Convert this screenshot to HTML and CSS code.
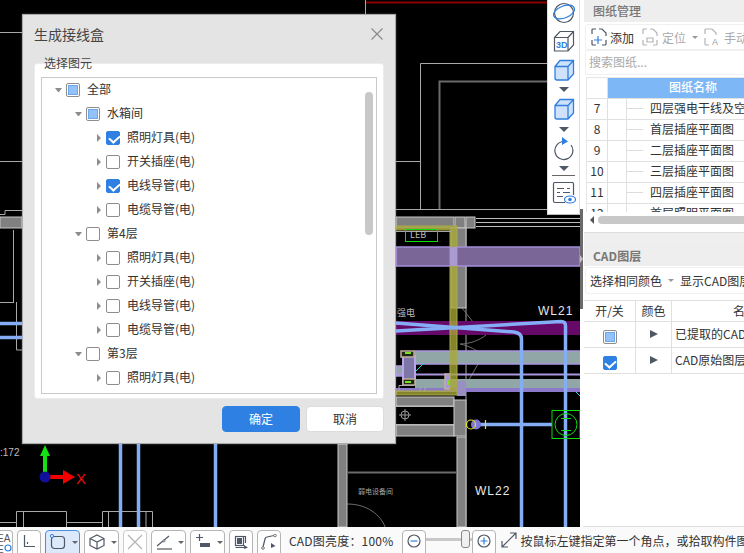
FILE: index.html
```html
<!DOCTYPE html>
<html lang="zh-CN">
<head>
<meta charset="utf-8">
<title>生成接线盒</title>
<link rel="stylesheet" href="styles.css">
</head>
<body>
<div class="app">
  <div class="main">
    <div class="canvas">
      <svg class="drawing" width="580" height="527" viewBox="0 0 580 527">
        <!-- thin outlines -->
        <g class="ln">
          <path d="M0 32.5H22M0 161.5H22M0 214.5H5V210.5H22M13.500 230V302M0 302.500H14M16.500 302V350H22"/>
          <path d="M365.500 0V14M420.500 209V63.500H547M396 161.500H420M396 209.500H547"/>
          <path d="M466 220V527M396 406.500H454M396 424.500H454"/>
          <path d="M16.500 527V511.500H66.500V527M23.500 511.500V527M66.500 522.500H102.500M102.500 527V511.500H152.500V527M108.500 511.500V527M146 511.500V527M0 522.500H16"/>
          <path d="M347 504C358 504 366 507 372 511C378 515 383 521 385 527" class="thin"/>
          <path d="M462 308L473 322M460 344C470 344 480 340 486 335M460 344C470 346 476 350 481 354M462 392L478 364" class="thin"/>
        </g>
        <path class="ln-dark" d="M439.500 209V81.500H547M348 472.500H456"/>
        <path class="ln-red" d="M366 2.500H547"/>
        <!-- walls -->
        <g class="wall">
          <rect x="0" y="217" width="22" height="11"/>
          <rect x="396" y="217" width="58" height="11"/>
          <rect x="455" y="217" width="10" height="11"/>
          <rect x="466" y="217" width="9" height="11"/>
          <rect x="451" y="228" width="15" height="80"/>
          <rect x="396" y="397" width="58" height="9"/>
          <rect x="396" y="425" width="58" height="11"/>
          <rect x="454" y="400" width="12" height="36"/>
          <rect x="457" y="437" width="9" height="90"/>
          <rect x="338" y="444" width="9" height="83"/>
        </g>
        <path class="ln-thin" d="M476 218.500H580M476 222.500H580M476 226.500H580"/>
        <!-- bands -->
        <rect class="band-purple" x="396" y="247" width="184" height="19"/>
        <rect class="band-magenta" x="396" y="321" width="184" height="14"/>
        <rect class="band-teal" x="415" y="351" width="165" height="13"/>
        <rect class="band-teal" x="396" y="366" width="7" height="10"/>
        <path class="stripe" d="M396 374.500H580"/>
        <rect class="band-teal-flat" x="415" y="379" width="165" height="9"/>
        <rect class="band-violet" x="396" y="388" width="184" height="4"/>
        <rect class="box-purple" x="403" y="356" width="12" height="28"/>
        <rect class="box-tan" x="401" y="351" width="13" height="6"/>
        <rect class="box-tan" x="403" y="379" width="12" height="6"/>
        <rect class="box-tan-purple" x="445" y="374" width="5" height="15"/>
        <path class="spot-g" d="M448 380V385M405 353H411M405 382H411"/>
        <path class="ln" d="M399 392V385.500H414M421 388L419 392M426 386L424 392"/>
        <path class="ln-cyan" d="M416 371L423 364M576 392L580 396"/>
        <!-- olive frame -->
        <path class="olive" d="M396 226H457V395H396V391H450V230H396Z"/>
        <rect class="overlap" x="450" y="247" width="7" height="19"/>
        <rect class="overlap-low" x="457" y="381" width="9" height="15"/>
        <path class="ln" d="M396 231.500H451"/>
        <rect class="ln-green" x="405.500" y="229.500" width="32" height="12"/>
        <!-- cables -->
        <g class="cable">
          <path d="M0 323.500H22M0 337.500H22"/>
          <path d="M396 323L514 332Q521.500 333 521.500 339V527"/>
          <path d="M396 331L561 321.500Q565.500 321.500 565.500 326V527"/>
          <path d="M120.500 444V527M138.500 444V527M215.500 444V527M480 424.500H552"/>
        </g>
        <circle class="blob" cx="476" cy="424.500" r="5"/>
        <circle class="mark" cx="471" cy="424.500" r="4.500"/>
        <path class="mark" d="M485.500 420V429"/>
        <rect class="ln-green" x="552" y="410.500" width="28" height="28"/>
        <circle class="ln-green" cx="566" cy="424.500" r="11"/>
        <path class="ln-green" d="M561 418.500H571M561 430.500H571"/>
        <g class="target"><circle cx="405" cy="415" r="4"/><path d="M405 409V421M399 415H411"/></g>
        <!-- labels -->
        <text class="cad-text" x="538" y="315">WL21</text>
        <text class="cad-text" x="475" y="495">WL22</text>
        <text class="cad-small" x="410" y="238">LEB</text>
        <text class="cad-small" x="397" y="316">强电</text>
        <text class="cad-tiny" x="358" y="494">弱电设备间</text>
        <text class="cad-mark" x="0" y="456">:172</text>
        <!-- axis -->
        <path class="axis-g" d="M43 477V456H40L45 445L50 456H47V477Z"/>
        <path class="axis-r" d="M45 475H63V470L75 477L63 484V479H45Z"/>
        <circle class="axis-b" cx="45" cy="477" r="5.500"/>
        <text class="axis-x" x="76" y="484">X</text>
      </svg>

      <div class="float-tools">
        <svg class="ft-icon" width="24" height="22" viewBox="0 0 24 22"><circle class="i-dark" cx="12" cy="11" r="9.500"/><ellipse class="i-blue" cx="12" cy="10" rx="11" ry="6" transform="rotate(-22 12 10)"/></svg>
        <svg class="ft-icon" width="24" height="22" viewBox="0 0 24 22"><path class="i-dark" d="M2.500 7.500L8 1.500H21.500V15L16 21H2.500ZM2.500 7.500H16V21M16 7.500L21.500 1.500"/><text class="i-3d" x="4" y="18">3D</text></svg>
        <svg class="ft-icon ft-m7" width="24" height="22" viewBox="0 0 24 22"><path class="i-cube" d="M3 7.500L8 1.500H21.500V15L16 21H5Q3 21 3 19ZM3 7.500H16V21M16 7.500L21.500 1.500"/></svg>
        <span class="caret-down ft-caret"></span>
        <svg class="ft-icon" width="24" height="22" viewBox="0 0 24 22"><path class="i-cube" d="M3 7.500L8 1.500H21.500V15L16 21H5Q3 21 3 19ZM3 7.500H16V21M16 7.500L21.500 1.500"/></svg>
        <span class="caret-down ft-caret ft-m7"></span>
        <svg class="ft-icon ft-m5" width="24" height="24" viewBox="0 0 24 24"><path class="i-dark" d="M12 4.500A9 9 0 1 0 19 8"/><path class="i-fill" d="M10 0L16 4.500L10 8Z"/></svg>
        <span class="caret-down ft-caret ft-m5"></span>
        <div class="ft-line"></div>
        <svg class="ft-icon" width="24" height="22" viewBox="0 0 24 22"><path class="i-dark" d="M13 20.500H3Q1.500 20.500 1.500 19V2Q1.500 .500 3 .500H20Q21.500 .500 21.500 2V13"/><path class="i-dark" d="M5 6.500H12M15 6.500H18M5 10.500H8M11 10.500H18M5 14.500H11"/><ellipse class="i-blue" cx="18" cy="17.500" rx="5.500" ry="3.500"/><circle class="i-fill" cx="18" cy="17.500" r="1.800"/></svg>
      </div>
    </div>
    <div class="splitter"></div>

    <aside class="panel">
      <div class="pane-title">图纸管理</div>
      <div class="pane-tools">
        <svg class="tool-ic" width="16" height="18" viewBox="0 0 16 18"><path class="i-dark" d="M1 6V2Q1 1 2 1H5M8 1H11L15 5V8M15 12V16Q15 17 14 17H11M5 17H2Q1 17 1 16V12"/><path class="i-blue" d="M7 8V16M3 12H11"/></svg>
        <span class="tool-label tool-first">添加</span>
        <svg class="tool-ic tool-sp" width="16" height="18" viewBox="0 0 16 18"><path class="i-mute" d="M1 6V2Q1 1 2 1H5M8 1H11L15 5V8M15 12V16Q15 17 14 17H11M5 17H2Q1 17 1 16V12M5 10H11V14H5Z"/></svg>
        <span class="tool-label mute">定位</span>
        <span class="caret-small"></span>
        <svg class="tool-ic" width="16" height="18" viewBox="0 0 16 18"><path class="i-mute" d="M1 6V2Q1 1 2 1H8L12 5V7M1 10V16Q1 17 2 17H5"/><text class="i-a" x="8" y="17">A</text></svg>
        <span class="tool-label mute">手动</span>
      </div>
      <div class="pane-search">搜索图纸...</div>
      <div class="sheet">
        <div class="sheet-head"><span class="sh-num"></span><span class="sh-name">图纸名称</span></div>
        <div class="sheet-row"><span class="sh-num">7</span><span class="sh-tree"></span><span class="sh-dash"></span><span class="sh-text">四层强电干线及空调</span></div>
        <div class="sheet-row"><span class="sh-num">8</span><span class="sh-tree"></span><span class="sh-dash"></span><span class="sh-text">首层插座平面图</span></div>
        <div class="sheet-row"><span class="sh-num">9</span><span class="sh-tree"></span><span class="sh-dash"></span><span class="sh-text">二层插座平面图</span></div>
        <div class="sheet-row"><span class="sh-num">10</span><span class="sh-tree"></span><span class="sh-dash"></span><span class="sh-text">三层插座平面图</span></div>
        <div class="sheet-row"><span class="sh-num">11</span><span class="sh-tree"></span><span class="sh-dash"></span><span class="sh-text">四层插座平面图</span></div>
        <div class="sheet-row"><span class="sh-num">12</span><span class="sh-tree"></span><span class="sh-dash"></span><span class="sh-text">首层照明平面图</span></div>
      </div>
      <div class="hscroll"><span class="hscroll-arrow"></span><span class="hscroll-thumb"></span></div>
      <div class="pane-gap"></div>
      <div class="pane-title pane-title-bold">CAD图层</div>
      <div class="pane-tools layer-tools">
        <span class="tool-label">选择相同颜色</span>
        <span class="caret-small"></span>
        <span class="tool-label layer-show">显示CAD图层</span>
      </div>
      <div class="layers">
        <div class="layer-row layer-head"><span class="lc-a">开/关</span><span class="lc-b">颜色</span><span class="lc-c lc-center">名称</span></div>
        <div class="layer-row layer-body"><span class="lc-a"><i class="cb cb-partial"></i></span><span class="lc-b"><i class="play"></i></span><span class="lc-c">已提取的CAD图层</span></div>
        <div class="layer-row layer-body"><span class="lc-a"><i class="cb cb-on"></i></span><span class="lc-b"><i class="play"></i></span><span class="lc-c">CAD原始图层</span></div>
      </div>
    </aside>
  </div>

  <footer class="statusbar">
    <div class="sb-btn sb-first"><svg width="14" height="20" viewBox="0 0 14 20"><text class="i-eq" x="-2" y="9">EA</text><text class="i-eq" x="-2" y="20">E</text><circle class="i-blue" cx="9" cy="15" r="3"/></svg></div>
    <div class="sb-btn sb-w24"><svg width="14" height="14" viewBox="0 0 14 14"><path class="i-dark" d="M2.500 1V12.500H13"/><path class="i-dark" d="M5.500 8V10"/></svg></div>
    <div class="sb-btn sb-w35 sb-on"><svg width="16" height="16" viewBox="0 0 16 16"><rect class="i-dark" x="1.500" y="2.500" width="13" height="12" rx="3"/><circle class="i-dotb" cx="2" cy="2" r="1.600"/></svg><span class="caret-small"></span></div>
    <div class="sb-btn sb-w35"><svg width="16" height="16" viewBox="0 0 16 16"><path class="i-dark" d="M8 1L15 4.500V11.500L8 15L1 11.500V4.500ZM1 4.500L8 8L15 4.500M8 8V15"/></svg><span class="caret-small"></span></div>
    <div class="sb-btn sb-w24 sb-dim"><svg width="16" height="16" viewBox="0 0 16 16"><path class="i-mute" d="M1 1L15 15M15 1L1 15"/></svg></div>
    <div class="sb-btn sb-w35"><svg width="16" height="16" viewBox="0 0 16 16"><path class="i-dark" d="M1 12L13 2"/><path class="i-mute2" d="M1 15H16"/><circle class="i-dotg" cx="8" cy="7" r="1"/></svg><span class="caret-small"></span></div>
    <div class="sb-btn sb-w35"><svg width="16" height="16" viewBox="0 0 16 16"><path class="i-dark" d="M1 3.500H8M4.500 0V7"/><rect class="i-solid" x="5" y="9" width="10" height="4"/></svg><span class="caret-small"></span></div>
    <div class="sb-btn sb-w24"><svg width="14" height="16" viewBox="0 0 14 16"><rect class="i-dark" x="1.500" y="2.500" width="8" height="9"/><rect class="i-solid" x="3" y="4" width="5" height="6"/><path class="i-dark" d="M1.500 13.500H10M10 2.500H11.500V9"/><path class="i-solid" d="M10 11L14 13.500L10 15Z"/></svg></div>
    <div class="sb-btn sb-w24"><svg width="16" height="16" viewBox="0 0 16 16"><path class="i-dark" d="M2 13L4 5Q4.500 3 6 3L13 1.500"/><circle class="i-node" cx="2" cy="14" r="1.300"/><circle class="i-node" cx="14" cy="1.500" r="1.300"/><path class="i-solid" d="M10 9L14.500 12L10 14Z"/></svg></div>
    <span class="sb-text sb-bright">CAD图亮度：100%</span>
    <div class="sb-btn sb-zoom"><svg width="14" height="14" viewBox="0 0 14 14"><circle class="i-dark" cx="7" cy="7" r="6"/><path class="i-blue" d="M3.500 7H10.500"/></svg></div>
    <div class="slider"><span class="slider-handle"></span></div>
    <div class="sb-btn sb-zoom sb-zoom-plus"><svg width="14" height="14" viewBox="0 0 14 14"><circle class="i-dark" cx="7" cy="7" r="6"/><path class="i-blue" d="M3.500 7H10.500M7 3.500V10.500"/></svg></div>
    <svg class="sb-expand" width="16" height="16" viewBox="0 0 16 16"><path class="i-dark" d="M1 15L15 1M9 1H15V7M1 9V15H7"/></svg>
    <span class="sb-text sb-hint">按鼠标左键指定第一个角点，或拾取构件图元</span>
  </footer>

  <section class="dialog">
    <header class="dialog-head">
      <h1 class="dialog-title">生成接线盒</h1>
      <svg class="dialog-close" width="12" height="12" viewBox="0 0 12 12"><path d="M.5 .5L11.500 11.500M11.500 .5L.5 11.500"/></svg>
    </header>
    <div class="fieldset">
      <span class="legend">选择图元</span>
      <div class="tree">
        <div class="node l0"><i class="caret-open"></i><i class="cb cb-partial"></i><span>全部</span></div>
        <div class="node l1"><i class="caret-open"></i><i class="cb cb-partial"></i><span>水箱间</span></div>
        <div class="node l2"><i class="caret-closed"></i><i class="cb cb-on"></i><span>照明灯具(电)</span></div>
        <div class="node l2"><i class="caret-closed"></i><i class="cb"></i><span>开关插座(电)</span></div>
        <div class="node l2"><i class="caret-closed"></i><i class="cb cb-on"></i><span>电线导管(电)</span></div>
        <div class="node l2"><i class="caret-closed"></i><i class="cb"></i><span>电缆导管(电)</span></div>
        <div class="node l1"><i class="caret-open"></i><i class="cb"></i><span>第4层</span></div>
        <div class="node l2"><i class="caret-closed"></i><i class="cb"></i><span>照明灯具(电)</span></div>
        <div class="node l2"><i class="caret-closed"></i><i class="cb"></i><span>开关插座(电)</span></div>
        <div class="node l2"><i class="caret-closed"></i><i class="cb"></i><span>电线导管(电)</span></div>
        <div class="node l2"><i class="caret-closed"></i><i class="cb"></i><span>电缆导管(电)</span></div>
        <div class="node l1"><i class="caret-open"></i><i class="cb"></i><span>第3层</span></div>
        <div class="node l2"><i class="caret-closed"></i><i class="cb"></i><span>照明灯具(电)</span></div>
        <span class="tree-scroll"></span>
      </div>
    </div>
    <div class="dialog-actions">
      <button class="btn btn-primary" type="button">确定</button>
      <button class="btn" type="button">取消</button>
    </div>
  </section>
</div>
</body>
</html>
```

FILE: styles.css
```css
* { box-sizing: border-box; }
html, body { margin: 0; padding: 0; background: #fff; }
body { font-family: "Noto Sans CJK SC", "Liberation Sans", sans-serif; font-size: 12px; color: #333; }
i { display: block; font-style: normal; }

.app { position: relative; width: 744px; height: 553px; display: flex; flex-direction: column; overflow: hidden; }
.main { display: flex; height: 527px; flex: none; }

/* CAD canvas */
.canvas { position: relative; flex: 0 0 580px; background: #000; overflow: hidden; }
.drawing { display: block; }
.ln { fill: none; stroke: #a8a8a8; stroke-width: 1; }
.ln .thin, .thin { stroke: #6e6e6e; }
.ln-dark { fill: none; stroke: #6b6b6b; stroke-width: 2; }
.ln-thin { fill: none; stroke: #bdbdbd; stroke-width: 1; }
.ln-red { fill: none; stroke: #8a0000; stroke-width: 2; }
.ln-green { fill: none; stroke: #0fdc0f; stroke-width: 1; }
.ln-cyan { fill: none; stroke: #22d6e8; stroke-width: 1; }
.wall rect { fill: #808080; stroke: #c8c8c8; stroke-width: 1; }
.band-purple { fill: #7a6797; stroke: #a48fd8; stroke-width: 1.500; }
.band-magenta { fill: #650a68; }
.band-teal { fill: #91a6a6; stroke: #ab97e0; stroke-width: 1.500; }
.band-teal-flat { fill: #91a6a6; }
.band-violet { fill: #8d79c9; }
.stripe { fill: none; stroke: #ab97e0; stroke-width: 2; }
.box-purple { fill: #7f76a8; stroke: #b9a5ea; stroke-width: 2; }
.box-tan { fill: #1d2a14; stroke: #c2ae9f; stroke-width: 1.500; }
.box-tan-purple { fill: #a796da; stroke: #c2ae9f; stroke-width: 1.500; }
.spot-g { fill: none; stroke: #7fe020; stroke-width: 2; }
.olive { fill: #a8a938; fill-opacity: .78; stroke: #a8a84a; stroke-width: 1; }
.overlap { fill: #ab9ad0; }
.overlap-low { fill: #9a8fc4; }
.cable { fill: none; stroke: #85adf5; stroke-width: 3.500; }
.blob { fill: #7d78d8; }
.mark { fill: none; stroke: #e5e520; stroke-width: 1.200; }
.target { fill: none; stroke: #9a9a9a; stroke-width: 1; }
.cad-text { fill: #e8e8e8; font-family: "Liberation Sans", sans-serif; font-size: 12px; letter-spacing: 1px; }
.cad-small { fill: #bdbdbd; font-family: "Noto Sans CJK SC", sans-serif; font-size: 9px; }
.cad-tiny { fill: #a5a5a5; font-family: "Noto Sans CJK SC", sans-serif; font-size: 7px; }
.cad-mark { fill: #bdbdbd; font-family: "Liberation Sans", sans-serif; font-size: 10px; }
.axis-g { fill: #14e014; }
.axis-r { fill: #f00000; }
.axis-b { fill: #10109a; }
.axis-x { fill: #e81010; font-family: "Liberation Sans", sans-serif; font-size: 15px; }

/* floating view tools */
.float-tools { position: absolute; top: 0; right: 0; width: 33px; height: 215px; background: #fff; border-right: 1px solid #ddd; border-bottom: 1px solid #bbb; border-left: 1px solid #ddd; display: flex; flex-direction: column; align-items: center; padding-top: 2px; }
.ft-icon { display: block; flex: none; margin-top: 6px; }
.ft-icon:first-child { margin-top: 0; }
.ft-caret { margin-top: 6px; }
.float-tools .ft-m7 { margin-top: 7px; }
.float-tools .ft-m5 { margin-top: 5px; }
.ft-line { width: 23px; height: 1px; background: #666; margin-top: 4px; }
.ft-line + .ft-icon { margin-top: 6px; }
.i-dark { fill: none; stroke: #4f5866; stroke-width: 1.200; }
.i-blue { fill: none; stroke: #2f7fe0; stroke-width: 1.200; }
.i-mute { fill: none; stroke: #b4b4b4; stroke-width: 1.200; }
.i-mute2 { fill: none; stroke: #9a9a9a; stroke-width: 2; }
.i-fill { fill: #2f7fe0; }
.i-cube { fill: #cfe2fb; stroke: #2f7fe0; stroke-width: 1.300; }
.i-3d { fill: #2f7fe0; font-family: "Liberation Sans", sans-serif; font-size: 9px; font-weight: 700; }
.i-a { fill: #9a9a9a; font-family: "Liberation Sans", sans-serif; font-size: 9px; }
.i-eq { fill: #555; font-family: "Liberation Sans", sans-serif; font-size: 10px; }
.i-solid { fill: #4f5866; }
.i-dotb { fill: #dceafc; stroke: #2f7fe0; stroke-width: 1; }
.i-dotg { fill: #fff; stroke: #777; }
.i-node { fill: #fff; stroke: #777; stroke-width: 1; }
.caret-down { display: block; width: 0; height: 0; border-style: solid; border-width: 5px 5px 0; border-color: #4f5866 transparent transparent; flex: none; }
.caret-small { display: block; width: 0; height: 0; border-style: solid; border-width: 3px 3.500px 0; border-color: #666 transparent transparent; flex: none; }

.splitter { position: relative; flex: 0 0 3px; background: linear-gradient(#fff 0 209px, #6b6b6b 209px 309px, #fff 309px); }
.splitter::after { content: ""; position: absolute; left: 0; top: 255px; border-style: solid; border-width: 4px 0 4px 3px; border-color: transparent transparent transparent #c4c4c4; }

/* right panel */
.panel { flex: 1; min-width: 0; background: #fff; border-bottom: 1px solid #ddd; overflow: hidden; display: flex; flex-direction: column; }
.pane-title { flex: none; height: 22px; margin-left: 1px; padding-left: 9px; background: #eee; color: #777; font-size: 12px; line-height: 22px; font-weight: 500; white-space: nowrap; }
.pane-title-bold { height: 21px; line-height: 21px; font-weight: 700; }
.pane-tools { flex: none; height: 26px; margin: 2px 0 0 2px; padding-left: 5px; display: flex; align-items: center; border: 1px solid #f0f0f0; border-right: 0; border-radius: 4px 0 0 4px; white-space: nowrap; overflow: hidden; }
.tool-ic { flex: none; display: block; }
.tool-label { flex: none; margin: 1px 0 0 4px; font-size: 12px; color: #333; line-height: 18px; }
.tool-label.mute { color: #aaa; }
.tool-label.tool-first { margin-left: 3px; }
.tool-sp { margin-left: 8px; }
.pane-tools .caret-small { margin: 0 6px; border-top-color: #999; }
.pane-search { flex: none; height: 25px; margin: 0 0 0 2px; padding-left: 3px; border: 1px solid #f0f0f0; border-right: 0; color: #aaa; font-size: 12px; line-height: 21px; }
.sheet { flex: none; height: 135px; margin: 2px 0 0 3px; overflow: hidden; border-top: 1px solid #e6e6e6; border-left: 1px solid #e6e6e6; }
.sheet-head { display: flex; height: 20px; }
.sh-num { flex: 0 0 21px; border-right: 1px solid #e0e0e0; text-align: center; color: #333; font-size: 12px; line-height: 18px; }
.sh-name { flex: 1; background: #7db7f5; color: #fff; font-weight: 500; text-align: center; line-height: 18px; padding-left: 34px; white-space: nowrap; }
.sheet-row { display: flex; align-items: stretch; height: 21px; border-top: 1px solid #e0e0e0; white-space: nowrap; line-height: 18px; }
.sh-tree { flex: 0 0 19px; border-right: 1px solid #e0e0e0; }
.sh-dash { flex: 0 0 16px; height: 1px; margin-top: 9px; background: #ddd; }
.sh-text { margin-left: 7px; color: #333; }
.hscroll { flex: none; height: 14px; margin-top: 1px; padding-left: 7px; display: flex; align-items: center; gap: 4px; }
.hscroll-arrow { width: 0; height: 0; border-style: solid; border-width: 4px 4px 4px 0; border-color: transparent #555 transparent transparent; flex: none; }
.hscroll-thumb { flex: 1; height: 8px; background: #c8c8c8; border-radius: 4px 0 0 4px; }
.pane-gap { flex: none; height: 18px; margin-left: 1px; background: linear-gradient(#fff 0 5px, #ddd 5px 6px, #efefef 6px); }
.layer-tools { height: 27px; margin-top: 1px; padding-left: 4px; }
.layer-tools .tool-label { margin-left: 0; margin-top: 0; }
.layer-tools .caret-small { margin: 0 6px; }
.layers { flex: none; margin: 6px 0 0 1px; border-top: 1px solid #e0e0e0; }
.layer-row { display: flex; border-bottom: 1px solid #e0e0e0; white-space: nowrap; }
.layer-head { height: 21px; line-height: 20px; }
.layer-body { height: 26px; line-height: 23px; }
.lc-a { flex: 0 0 52px; border-right: 1px solid #e0e0e0; display: flex; align-items: center; justify-content: center; }
.layer-body .lc-a { padding-top: 5px; }
.lc-b { flex: 0 0 36px; border-right: 1px solid #e0e0e0; display: flex; align-items: center; justify-content: center; }
.lc-c { flex: 1; min-width: 0; padding-left: 3px; }
.lc-center { padding-left: 61px; }
.play { width: 0; height: 0; margin-top: -2px; border-style: solid; border-width: 4.500px 0 4.500px 8px; border-color: transparent transparent transparent #4f5866; }

/* status bar */
.statusbar { flex: none; height: 26px; background: #fafafa; padding-top: 3px; display: flex; align-items: flex-start; gap: 4px; overflow: hidden; white-space: nowrap; }
.sb-btn { flex: none; height: 28px; background: #fff; border: 1px solid #b5b5b5; border-radius: 4px; display: flex; align-items: flex-start; padding-top: 2px; }
.sb-first { width: 14px; margin-left: -1px; border-left: 0; border-radius: 0 4px 4px 0; }
.sb-w24 { width: 24px; justify-content: center; padding-top: 3px; }
.sb-w35 { width: 35px; padding-left: 4px; gap: 6px; padding-top: 3px; }
.sb-w35 .caret-small { margin-top: 7px; }
.sb-on { background: #dbe9fb; border-color: #4a90e2; }
.sb-dim { border-color: #ccc; }
.statusbar svg { display: block; flex: none; }
.sb-text { flex: none; color: #333; font-size: 12px; line-height: 18px; }
.sb-bright { margin-left: 4px; margin-top: 2px; letter-spacing: .2px; }
.sb-zoom { width: 24px; justify-content: center; padding-top: 3px; margin-left: 5px; }
.slider { flex: 0 0 46px; height: 20px; margin: 0 0 0 -4px; position: relative; background: linear-gradient(transparent 0 8px, #c8c8c8 8px 11px, transparent 11px); }
.slider-handle { position: absolute; top: 0; right: 2px; width: 9px; height: 18px; background: #f0f0f0; border: 1px solid #888; border-radius: 3px; }
.statusbar .sb-zoom-plus { margin-left: -4px; }
.statusbar .sb-expand { margin: 2px 0 0 1px; }
.sb-hint { margin: 2px 0 0 -1px; }

/* dialog */
.dialog { position: absolute; left: 22px; top: 14px; width: 374px; height: 430px; background: #e4e4e5; border: 1px solid #a9a9a9; box-shadow: 0 0 2px rgba(255,255,255,.3); display: flex; flex-direction: column; }
.dialog-head { flex: none; height: 48px; padding: 0 12px 0 11px; display: flex; align-items: flex-start; justify-content: space-between; }
.dialog-title { margin: 9px 0 0; font-size: 14px; font-weight: 400; line-height: 20px; color: #444; }
.dialog-close { display: block; margin-top: 13px; }
.dialog-close path { fill: none; stroke: #888; stroke-width: 1.100; }
.fieldset { position: relative; flex: none; height: 336px; margin: 0 11px; padding: 13px 6px 6px; background: #fff; border: 1px solid #ececec; border-radius: 3px; }
.legend { position: absolute; left: 9px; top: -10px; color: #444; line-height: 18px; }
.tree { position: relative; height: 317px; margin: 0; border: 1px solid #c9c9c9; }
.node { display: flex; align-items: center; height: 24px; white-space: nowrap; color: #333; line-height: 18px; }
.node span { margin-top: -2px; }
.l0 { padding-left: 13px; }
.l1 { padding-left: 33px; }
.l2 { padding-left: 55px; }
.caret-open { flex: none; width: 7px; margin-right: 4px; height: 0; border-style: solid; border-width: 4px 3.500px 0; border-color: #8d8d8d transparent transparent; }
.caret-closed { flex: none; width: 0; height: 0; margin-right: 5px; border-style: solid; border-width: 4.500px 0 4.500px 4.500px; border-color: transparent transparent transparent #8d8d8d; }
.cb { position: relative; flex: none; width: 14px; height: 14px; background: #fff; border: 1px solid #8d8d8d; border-radius: 2px; }
.node .cb { margin-right: 7px; }
.cb-partial::after { content: ""; position: absolute; inset: 1px; background: #93c2fb; border: 1px solid #6ba6ef; }
.cb-on { background: #2f80e3; border-color: #2f80e3; }
.cb-on::after { content: ""; position: absolute; left: 3.500px; top: .5px; width: 5px; height: 8px; border-right: 2px solid #fff; border-bottom: 2px solid #fff; transform: rotate(42deg) skewX(-6deg); }
.tree-scroll { position: absolute; left: 323px; top: 14px; width: 8px; height: 143px; background: #c8c8c8; border-radius: 4px; }
.dialog-actions { flex: none; display: flex; justify-content: flex-end; gap: 6px; margin-top: 7px; padding-right: 11px; }
.btn { width: 78px; height: 26px; padding: 0; background: #fff; border: 1px solid #dcdcdc; border-radius: 4px; color: #333; font: inherit; font-size: 12px; line-height: 24px; }
.btn-primary { background: #2f80e3; border-color: #2f80e3; color: #fff; }
```
